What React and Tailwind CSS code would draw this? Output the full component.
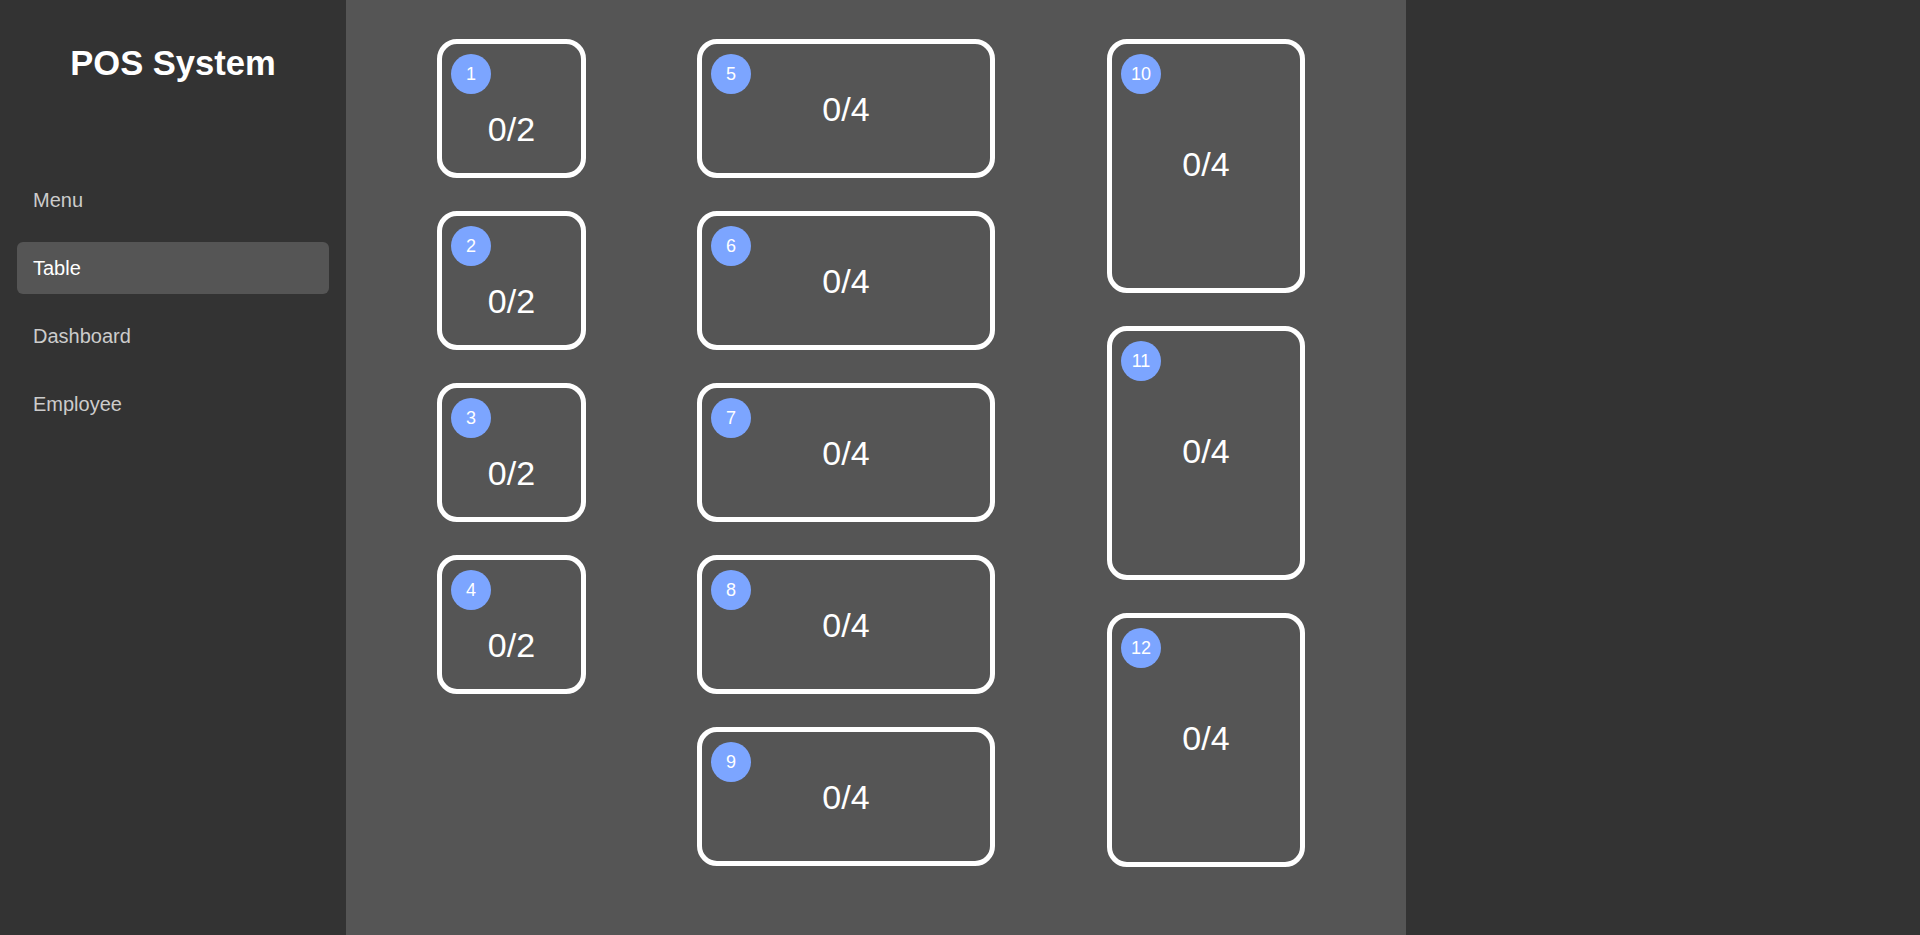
import React from "react";

const navItems = ["Menu", "Table", "Dashboard", "Employee"];

function TableCard({ num, seats, width, height, variant }) {
  const shift =
    variant === "narrow" ? "pt-[40px]" : variant === "tall" ? "pb-[4px]" : "";
  return (
    <div
      className={`relative flex items-center justify-center rounded-[20px] border-[5px] border-white ${width} ${height}`}
    >
      <div className="absolute left-[9px] top-[10px] flex h-[40px] w-[40px] items-center justify-center rounded-full bg-[#7ca5ff] text-[18px] leading-none text-white">
        {num}
      </div>
      <div className={`text-[34px] leading-[38px] text-white ${shift}`}>
        0/{seats}
      </div>
    </div>
  );
}

export default function App() {
  return (
    <div className="flex h-screen w-full overflow-hidden bg-[#333] font-['Liberation_Sans',Arial,sans-serif]">
      <aside className="w-[346px] shrink-0 bg-[#333] px-[17px]">
        <h1 className="pt-[43px] text-center text-[34.6px] font-bold leading-[40px] text-white">
          POS System
        </h1>
        <nav className="mt-[91px] flex flex-col gap-4">
          {navItems.map((item) => (
            <div
              key={item}
              className={`flex h-[52px] items-center rounded-[6px] pl-4 text-[20px] ${
                item === "Table" ? "bg-[#555] text-white" : "text-[#cccccc]"
              }`}
            >
              {item}
            </div>
          ))}
        </nav>
      </aside>
      <main className="flex w-[1060px] shrink-0 items-start bg-[#555] pl-[91px] pt-[39px]">
        <div className="flex w-[149px] flex-col gap-[33px]">
          {[1, 2, 3, 4].map((n) => (
            <TableCard key={n} num={n} seats={2} width="w-[149px]" height="h-[139px]" variant="narrow" />
          ))}
        </div>
        <div className="ml-[111px] flex w-[298px] flex-col gap-[33px]">
          {[5, 6, 7, 8, 9].map((n) => (
            <TableCard key={n} num={n} seats={4} width="w-[298px]" height="h-[139px]" variant="wide" />
          ))}
        </div>
        <div className="ml-[112px] flex w-[198px] flex-col gap-[33px]">
          {[10, 11, 12].map((n) => (
            <TableCard key={n} num={n} seats={4} width="w-[198px]" height="h-[254px]" variant="tall" />
          ))}
        </div>
      </main>
      <div className="flex-1 bg-[#333]" />
    </div>
  );
}
